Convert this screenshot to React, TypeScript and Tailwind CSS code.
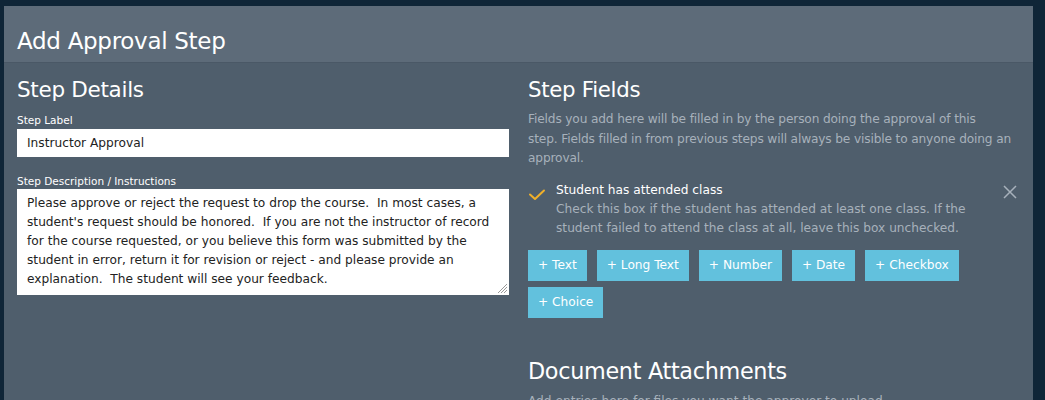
import React from "react";

const font = { fontFamily: '"DejaVu Sans", "Liberation Sans", sans-serif' };

export default function App() {
  const buttons = ["+ Text", "+ Long Text", "+ Number", "+ Date", "+ Checkbox", "+ Choice"];
  return (
    <div className="w-[1045px] h-[400px] overflow-hidden bg-[#0f2537] pl-[4px] pt-[6px]" style={font}>
      <div className="w-[1029px] h-[394px] bg-[#4f5e6c] overflow-hidden">
        <div className="h-[57px] bg-[#5d6b79] border-b border-[#4a5866] flex items-end pl-[13px] pb-[6px]">
          <h1 className="text-[23px] leading-[30px] text-white tracking-[-0.3px]">Add Approval Step</h1>
        </div>
        <div className="grid grid-cols-[492px_492px] gap-x-[19px] px-[13px] pt-[14px]">
          <div className="flex flex-col">
            <h2 className="text-[21.5px] leading-[26px] text-white tracking-[-0.3px]">Step Details</h2>
            <label className="mt-[10px] text-[10.5px] leading-[14px] text-white">Step Label</label>
            <div className="mt-[2px] h-[28px] bg-white flex items-center px-[10px] text-[12.2px] text-[#222]">
              Instructor Approval
            </div>
            <label className="mt-[17px] text-[10.5px] leading-[14px] text-white">Step Description / Instructions</label>
            <div className="relative mt-[1px] h-[106px] bg-white px-[10px] pt-[5px] text-[12.2px] leading-[19px] text-[#222] whitespace-pre-wrap">
              {"Please approve or reject the request to drop the course.  In most cases, a student's request should be honored.  If you are not the instructor of record for the course requested, or you believe this form was submitted by the student in error, return it for revision or reject - and please provide an explanation.  The student will see your feedback."}
              <svg className="absolute right-[1px] bottom-[1px]" width="12" height="12" viewBox="0 0 12 12">
                <path d="M11 2 L2 11 M11 5 L5 11 M11 8 L8 11" stroke="#999" strokeWidth="1" />
              </svg>
            </div>
          </div>
          <div className="flex flex-col">
            <h2 className="text-[21.3px] leading-[26px] text-white tracking-[-0.3px]">Step Fields</h2>
            <p className="mt-[7px] text-[12.2px] leading-[19.5px] text-[#a7b1bb] tracking-[-0.15px]">
              Fields you add here will be filled in by the person doing the approval of this
              <br />
              step. Fields filled in from previous steps will always be visible to anyone doing an approval.
            </p>
            <div className="mt-[12px] flex items-start">
              <svg className="mt-[8px] shrink-0" width="18" height="12" viewBox="0 0 18 12">
                <path d="M2 5.5 L7 10 L16 1.5" stroke="#f0b02a" strokeWidth="2" fill="none" strokeLinecap="round" strokeLinejoin="round" />
              </svg>
              <div className="ml-[10px] flex-1">
                <div className="text-[12.2px] leading-[19px] text-white">Student has attended class</div>
                <div className="text-[12.2px] leading-[19px] text-[#a7b1bb]">
                  Check this box if the student has attended at least one class. If the student failed to attend the class at all, leave this box unchecked.
                </div>
              </div>
              <svg className="mt-[3px] ml-[8px] mr-[2px] shrink-0" width="16" height="16" viewBox="0 0 16 16">
                <path d="M2 2 L14 14 M14 2 L2 14" stroke="#a7b1bb" strokeWidth="1.5" />
              </svg>
            </div>
            <div className="mt-[12px] flex flex-wrap gap-x-[10px] gap-y-[6px]">
              {buttons.map((b) => (
                <div key={b} className="h-[31px] px-[10px] bg-[#62c1dd] text-white text-[12.2px] flex items-center">
                  {b}
                </div>
              ))}
            </div>
            <h2 className="mt-[40px] text-[22.3px] leading-[26px] text-white tracking-[-0.3px]">Document Attachments</h2>
            <p className="mt-[8px] text-[12.2px] leading-[19px] text-[#a7b1bb]">
              Add entries here for files you want the approver to upload.
            </p>
          </div>
        </div>
      </div>
    </div>
  );
}
